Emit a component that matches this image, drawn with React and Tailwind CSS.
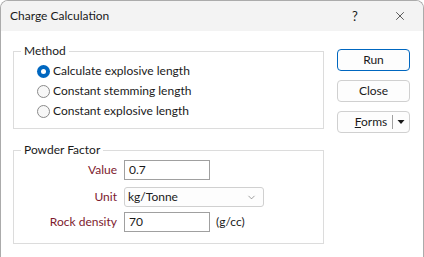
import { ChevronDown, X } from "lucide-react";

const font = { fontFamily: "Lato, 'Liberation Sans', sans-serif" };

function Radio({ checked, label }) {
  return (
    <label className="flex h-[20px] items-center gap-[3px]">
      {checked ? (
        <span className="flex h-[13px] w-[13px] items-center justify-center rounded-full bg-[#0067c0]">
          <span className="h-[5px] w-[5px] rounded-full bg-white" />
        </span>
      ) : (
        <span className="h-[13px] w-[13px] rounded-full border border-[#8a8a8a] bg-[#f7f7f7]" />
      )}
      <span>{label}</span>
    </label>
  );
}

function Field({ label, children }) {
  return (
    <div className="flex items-center gap-[7px]">
      <span className="w-[103px] text-right text-[#7d1a2e]">{label}</span>
      {children}
    </div>
  );
}

function Button({ children, primary }) {
  return (
    <button
      className={
        "flex h-[22px] w-[73px] items-center justify-center rounded-[4px] border bg-[#fdfdfd] text-[12px] text-[#1a1a1a] " +
        (primary ? "border-[#0067c0]" : "border-[#d0d0d0]")
      }
    >
      {children}
    </button>
  );
}

export default function App() {
  return (
    <div
      className="h-[257px] w-[424px] overflow-hidden rounded-t-[8px] border border-b-0 border-[#ababab] bg-white text-[12px] leading-[14px] text-[#1a1a1a]"
      style={font}
    >
      <div className="flex h-[30px] items-center bg-[#f3f3f3] pl-[9px]">
        <span className="flex-1 text-[12px]">Charge Calculation</span>
        <span className="w-[44px] text-center text-[13px]">?</span>
        <span className="flex w-[46px] justify-center">
          <X className="h-[14px] w-[14px]" strokeWidth={1.2} />
        </span>
      </div>

      <div className="flex gap-[13px] pl-[12px] pt-[13px]">
        <div className="flex w-[311px] flex-col">
          <fieldset className="border border-[#dcdcdc]">
            <legend className="ml-[7px] px-[3px]">Method</legend>
            <div className="pb-[7px] pl-[23px] pt-[3px]">
              <Radio checked label="Calculate explosive length" />
              <Radio label="Constant stemming length" />
              <Radio label="Constant explosive length" />
            </div>
          </fieldset>

          <fieldset className="mt-[14px] border border-[#dcdcdc]">
            <legend className="ml-[7px] px-[3px]">Powder Factor</legend>
            <div className="flex flex-col pb-[11px] pt-[3px]">
              <Field label="Value">
                <div className="flex h-[20px] w-[86px] items-center border border-[#a0a0a0] pl-[4px]">0.7</div>
              </Field>
              <div className="mt-[7px]">
                <Field label="Unit">
                  <div className="flex h-[20px] w-[140px] items-center justify-between rounded-[3px] border border-[#d0d0d0] bg-[#fdfdfd] pl-[3px] pr-[6px]">
                    <span>kg/Tonne</span>
                    <ChevronDown className="h-[11px] w-[11px] text-[#505050]" strokeWidth={1.2} />
                  </div>
                </Field>
              </div>
              <div className="mt-[5px]">
                <Field label="Rock density">
                  <div className="flex items-center gap-[6px]">
                    <div className="flex h-[20px] w-[86px] items-center border border-[#a0a0a0] pl-[4px]">70</div>
                    <span>(g/cc)</span>
                  </div>
                </Field>
              </div>
            </div>
          </fieldset>
        </div>

        <div className="mt-[5px] flex flex-col gap-[9px]">
          <Button primary>Run</Button>
          <Button>Close</Button>
          <Button>
            <span className="flex-1 pl-[12px] text-center">
              <span className="underline">F</span>orms
            </span>
            <span className="h-[14px] w-px bg-[#a0a0a0]" />
            <svg width="16" height="8" viewBox="0 0 16 8">
              <path d="M4.5 2h7l-3.5 4z" fill="#1a1a1a" />
            </svg>
          </Button>
        </div>
      </div>
    </div>
  );
}
